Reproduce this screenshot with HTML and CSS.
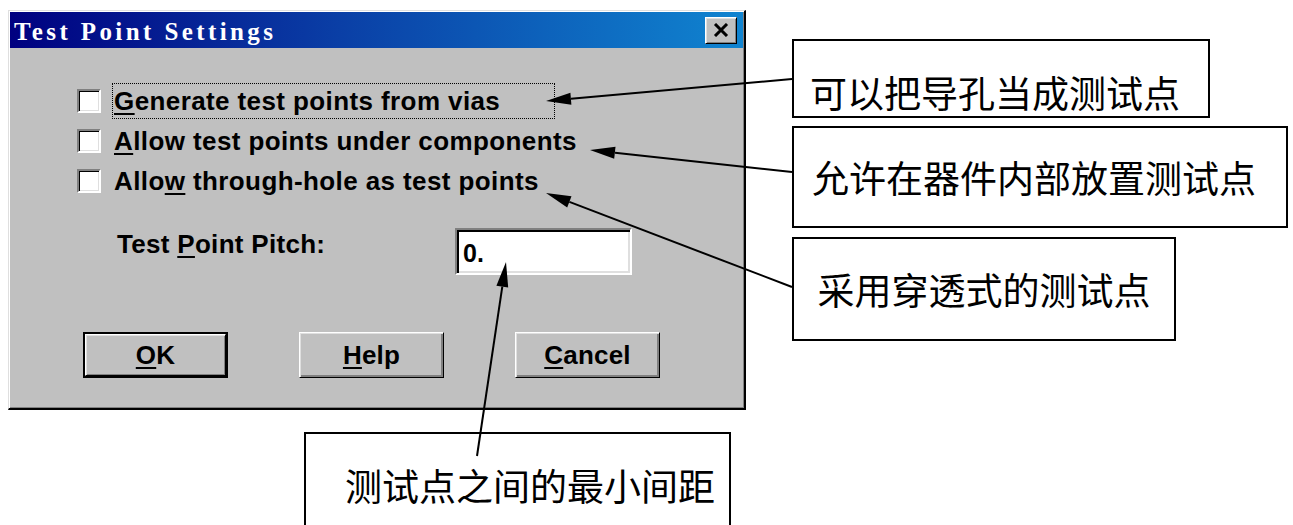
FILE: index.html
```html
<!DOCTYPE html>
<html>
<head>
<meta charset="utf-8">
<title>Test Point Settings</title>
<link rel="stylesheet" href="styles.css">
</head>
<body>
<div class="page">
  <div class="dialog">
    <div class="titlebar">
      <span class="title">Test Point Settings</span>
      <span class="close">
        <svg width="16" height="14" viewBox="0 0 16 14"><path d="M2 1 L14 13 M14 1 L2 13" stroke="#000" stroke-width="3" fill="none"/></svg>
      </span>
    </div>
    <div class="content">
      <div class="options">
        <div class="opt"><span class="chk"></span><span class="lbl focus"><span class="txt"><u>G</u>enerate test points from vias</span></span></div>
        <div class="opt"><span class="chk"></span><span class="lbl"><span class="txt"><u>A</u>llow test points under components</span></span></div>
        <div class="opt"><span class="chk"></span><span class="lbl"><span class="txt">Allo<u>w</u> through-hole as test points</span></span></div>
      </div>
      <div class="pitch">
        <span class="plabel">Test <u>P</u>oint Pitch:</span>
        <span class="edit">0.</span>
      </div>
      <div class="buttons">
        <span class="btn default"><span class="btn-in"><span class="txt"><u>O</u>K</span></span></span>
        <span class="btn"><span class="btn-in"><span class="txt"><u>H</u>elp</span></span></span>
        <span class="btn"><span class="btn-in"><span class="txt"><u>C</u>ancel</span></span></span>
      </div>
    </div>
  </div>

  <div class="note n1">可以把导孔当成测试点</div>
  <div class="note n2">允许在器件内部放置测试点</div>
  <div class="note n3">采用穿透式的测试点</div>
  <div class="note n4">测试点之间的最小间距</div>

  <svg class="arrows" width="1293" height="525" viewBox="0 0 1293 525">
    <g stroke="#000" stroke-width="2" fill="none">
      <line x1="792" y1="79" x2="571" y2="98.8"/>
      <line x1="792" y1="172" x2="615" y2="152.7"/>
      <line x1="792" y1="287" x2="569.4" y2="201.9"/>
      <line x1="477" y1="456" x2="502.3" y2="286.7"/>
    </g>
    <g fill="#000">
      <polygon points="546,101 570.4,92.8 571.4,104.7"/>
      <polygon points="590,150 615.5,146.8 614.2,158.7"/>
      <polygon points="546,193 571.5,196.3 567.2,207.5"/>
      <polygon points="506,262 508.2,287.6 496.4,285.8"/>
    </g>
  </svg>
</div>
</body>
</html>
```

FILE: styles.css
```css
* { box-sizing: border-box; }

html, body {
  margin: 0;
  padding: 0;
  background: #ffffff;
}

.page {
  position: relative;
  width: 1293px;
  height: 525px;
  overflow: hidden;
  padding-top: 10px;
  padding-left: 8px;
  font-family: "Liberation Sans", Arial, sans-serif;
}

/* ---------- dialog ---------- */
.dialog {
  width: 738px;
  height: 400px;
  background: #c0c0c0;
  border: 1px solid;
  border-color: #dfdfdf #000000 #000000 #dfdfdf;
  border-width: 1px 2px 2px 1px;
  padding: 1px;
  box-shadow: inset 1px 1px #ffffff, inset -1px -1px #808080;
  display: flex;
  flex-direction: column;
}

.titlebar {
  height: 36px;
  background: linear-gradient(to right, #000080 0%, #0a3fa6 45%, #1084d0 100%);
  display: flex;
  align-items: center;
  justify-content: space-between;
  padding: 0 6px 0 4px;
}

.title {
  font-family: "Liberation Serif", "Times New Roman", serif;
  font-weight: bold;
  font-size: 25px;
  letter-spacing: 3.4px;
  color: #ffffff;
  padding-top: 3px;
}

.close {
  width: 32px;
  height: 27px;
  background: #c0c0c0;
  border: 1px solid;
  border-color: #ffffff #000000 #000000 #ffffff;
  box-shadow: inset 1px 1px #dfdfdf, inset -1px -1px #808080;
  display: flex;
  align-items: center;
  justify-content: center;
}

.content {
  flex: 1;
  padding: 35px 0 0 0;
  font-weight: bold;
  font-size: 26px;
  color: #000;
}

u {
  text-decoration: underline;
  text-decoration-thickness: 2px;
  text-underline-offset: 3px;
}

.options {
  display: flex;
  flex-direction: column;
  gap: 4px;
  padding-left: 67px;
}

.opt {
  height: 36px;
  display: flex;
  align-items: center;
}

.chk {
  width: 24px;
  height: 24px;
  flex: none;
  background: #ffffff;
  border: 2px solid;
  border-color: #808080 #ffffff #ffffff #808080;
  box-shadow: inset 1px 1px #000000, inset -1px -1px #dfdfdf;
}

.lbl {
  margin-left: 11px;
  height: 36px;
  display: flex;
  align-items: center;
  padding: 0 1px;
  border: 1px dotted transparent;
  white-space: nowrap;
}

.txt {
  letter-spacing: 0.4px;
  white-space: nowrap;
}

.lbl.focus {
  width: 443px;
  border-color: #000000;
}

.pitch {
  margin-top: 29px;
  padding-left: 107px;
  display: flex;
  align-items: flex-start;
  height: 47px;
}

.plabel {
  width: 338px;
  line-height: 30px;
  padding-top: 1px;
  letter-spacing: 0.3px;
  white-space: nowrap;
}

.edit {
  width: 177px;
  height: 47px;
  background: #ffffff;
  border: 2px solid;
  border-color: #808080 #ffffff #ffffff #808080;
  box-shadow: inset 2px 2px #000000, inset -2px -2px #dfdfdf;
  font-size: 25px;
  line-height: 25px;
  padding: 11px 0 0 6px;
}

.buttons {
  margin-top: 57px;
  padding-left: 73px;
  display: flex;
  gap: 71px;
}

.btn {
  width: 145px;
  height: 46px;
  border: 1px solid;
  border-color: #ffffff #000000 #000000 #ffffff;
  background: #c0c0c0;
  box-shadow: inset 1px 1px #dfdfdf, inset -2px -2px #808080;
  display: flex;
}

.btn.default {
  border: 2px solid #000000;
  box-shadow: none;
}

.btn-in {
  flex: 1;
  display: flex;
  align-items: center;
  justify-content: center;
}

.btn-in .txt {
  letter-spacing: 0.2px;
}

.btn.default .btn-in {
  border: 1px solid;
  border-color: #ffffff #000000 #000000 #ffffff;
  box-shadow: inset 1px 1px #dfdfdf, inset -1px -1px #808080;
}

/* ---------- annotation callouts ---------- */
.note {
  position: absolute;
  background: #ffffff;
  border: 2px solid #000000;
  font-family: "Noto Sans CJK SC", "Noto Sans", sans-serif;
  font-weight: 400;
  font-size: 37px;
  line-height: 37px;
  color: #000000;
  white-space: nowrap;
}

.n1 {
  left: 792px;
  top: 39px;
  width: 418px;
  height: 79px;
  padding: 33px 0 0 16px;
}

.n2 {
  left: 792px;
  top: 126px;
  width: 496px;
  height: 102px;
  display: flex;
  align-items: center;
  padding-left: 18px;
}

.n3 {
  left: 792px;
  top: 237px;
  width: 384px;
  height: 104px;
  display: flex;
  align-items: center;
  justify-content: center;
}

.n4 {
  left: 304px;
  top: 432px;
  width: 427px;
  height: 130px;
  padding: 33px 0 0 39px;
}

.arrows {
  position: absolute;
  left: 0;
  top: 0;
  pointer-events: none;
}
```
